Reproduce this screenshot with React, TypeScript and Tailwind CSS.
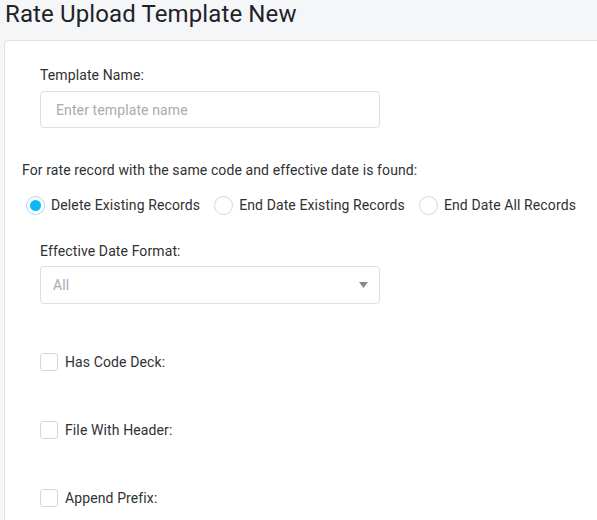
import { useState } from 'react';

const radios = ['Delete Existing Records', 'End Date Existing Records', 'End Date All Records'];
const checks = ['Has Code Deck:', 'File With Header:', 'Append Prefix:'];

export default function App() {
  const [mode, setMode] = useState(0);
  const [flags, setFlags] = useState([false, false, false]);

  return (
    <div
      className="h-[520px] w-[597px] overflow-hidden bg-[#f5f6f8] tracking-[0.11px] text-[#303133]"
      style={{ fontFamily: 'Roboto, "Liberation Sans", sans-serif' }}
    >
      <h1 className="pl-[5px] text-[24px] leading-[28px] tracking-[0.12px] text-[#1f2329]">Rate Upload Template New</h1>

      <div className="ml-[4px] mt-[12px] w-[620px] h-[600px] rounded-[4px] border border-[#dfe1e6] bg-white pt-[24px]">
        <div className="pl-[35px]">
          <div className="text-[14px] leading-[20px]">Template Name:</div>
          <input
            className="mt-[6px] block h-[37px] w-[340px] rounded-[4px] border border-[#dcdfe6] px-[15px] text-[14px] tracking-[0.11px] outline-none placeholder:text-[#a8abb2]"
            placeholder="Enter template name"
          />
        </div>

        <div className="mt-[32px] pl-[17px] text-[14px] leading-[20px]">
          For rate record with the same code and effective date is found:
        </div>

        <div className="mt-[15px] flex items-center pl-[21px] text-[14px] leading-[20px]">
          {radios.map((r, i) => (
            <label key={r} className="mr-[14px] flex cursor-pointer items-center" onClick={() => setMode(i)}>
              <span
                className={
                  i === mode
                    ? 'flex h-[19px] w-[19px] items-center justify-center rounded-full border border-[#a9dcf3] bg-white'
                    : 'flex h-[19px] w-[19px] items-center justify-center rounded-full border border-[#d4d7dc] bg-white'
                }
              >
                {i === mode && <span className="h-[11px] w-[11px] rounded-full bg-[#0cb7f7]" />}
              </span>
              <span className="ml-[6px]">{r}</span>
            </label>
          ))}
        </div>

        <div className="mt-[26px] pl-[35px]">
          <div className="text-[14px] leading-[20px]">Effective Date Format:</div>
          <div className="mt-[5px] flex h-[38px] w-[340px] items-center justify-between rounded-[4px] border border-[#dcdfe6] pl-[12px] pr-[11px] text-[14px] text-[#a8abb2]">
            <span>All</span>
            <svg width="9" height="6" viewBox="0 0 9 6">
              <path d="M0 0h9L4.5 6z" fill="#8a8a8a" />
            </svg>
          </div>
        </div>

        <div className="mt-[48px] flex flex-col gap-[48px] pl-[35px]">
          {checks.map((c, i) => (
            <label
              key={c}
              className="flex h-[20px] cursor-pointer items-center text-[14px]"
              onClick={() => setFlags(flags.map((f, j) => (j === i ? !f : f)))}
            >
              <span
                className={
                  flags[i]
                    ? 'h-[18px] w-[18px] rounded-[3px] border border-[#0cb7f7] bg-[#0cb7f7]'
                    : 'h-[18px] w-[18px] rounded-[3px] border border-[#d4d7dc] bg-white'
                }
              />
              <span className="ml-[7px]">{c}</span>
            </label>
          ))}
        </div>
      </div>
    </div>
  );
}
